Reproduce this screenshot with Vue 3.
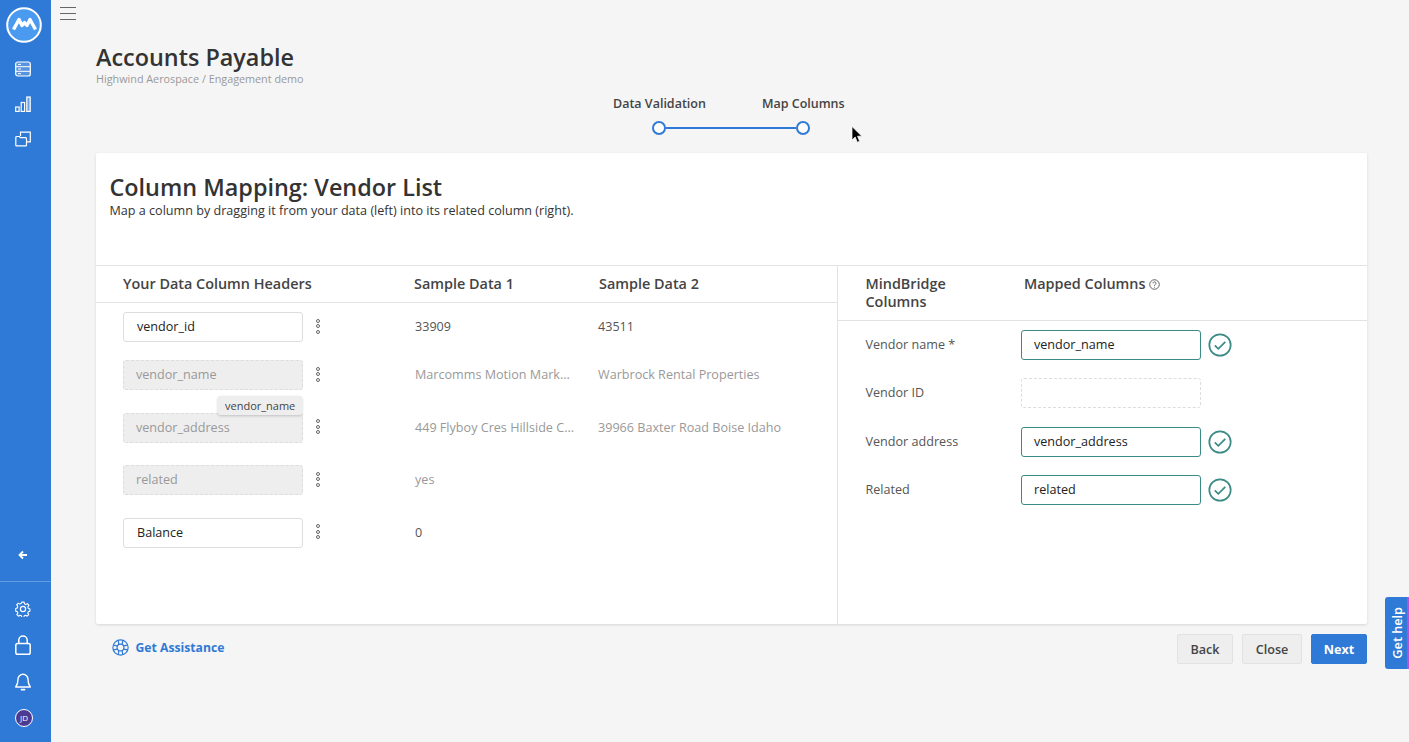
<template>
  <div class="app">
    <aside class="sidebar">
      <div class="logo">
        <svg width="36" height="36" viewBox="0 0 36 36">
          <circle cx="18" cy="18" r="16.8" fill="#4a9bf0" stroke="#fff" stroke-width="2" />
          <path d="M7.500 22.500 L13 12.500 L16 18.500 L18.500 15.500 L21 18.500 L24 12.500 L29.500 22.500" fill="none" stroke="#fff" stroke-width="3.400" stroke-linejoin="round" />
        </svg>
      </div>
      <nav class="nav-top">
        <svg class="nav-icon" viewBox="0 0 16 16" fill="rgba(255,255,255,0.2)" stroke="#fff" stroke-width="1.200">
          <rect x="0.7" y="1" width="14.6" height="14" rx="2" />
          <path d="M1 5.7h14M1 10.3h14M3 3.4h3M3 8h3M3 12.7h3" stroke-width="1" />
        </svg>
        <svg class="nav-icon" viewBox="0 0 16 16" fill="none" stroke="#fff" stroke-width="1.200">
          <rect x="0.7" y="11" width="3.4" height="4.4" />
          <rect x="6.2" y="6.500" width="3.4" height="8.9" />
          <rect x="11.8" y="1" width="3.4" height="14.4" fill="rgba(255,255,255,0.3)" />
        </svg>
        <svg class="nav-icon" viewBox="0 0 16 16" fill="none" stroke="#fff" stroke-width="1.200">
          <path d="M5.5 5V1.2h9.8v9.6h-3.8" />
          <path d="M0.8 6.5a1 1 0 0 1 1-1h2.5l1.2 1.2h5a1 1 0 0 1 1 1v6.6a.6.6 0 0 1-.6.6H1.4a.6.6 0 0 1-.6-.6z" />
        </svg>
      </nav>
      <div class="collapse-wrap">
        <svg class="back-arrow" viewBox="0 0 10 10" fill="none" stroke="#fff" stroke-width="1.800">
          <path d="M9 5H1.5M5 1.5L1.5 5 5 8.5" />
        </svg>
      </div>
      <nav class="nav-bottom">
        <svg class="nav-icon" viewBox="0 0 16 16" fill="none" stroke="#fff" stroke-width="1.200">
          <path d="M6.7 0.8h2.6l.4 2 1.5.7 1.8-1 1.6 1.9-1.2 1.7.4 1.6 1.9.7v2.4l-1.9.6-.5 1.6 1.1 1.7-1.8 1.7-1.7-1-1.5.6-.5 2H6.700l-.5-2-1.500-.6-1.700 1-1.800-1.700 1.100-1.700-.5-1.600-1.900-.6V7.900l1.900-.7.4-1.600-1.200-1.700 1.600-1.900 1.800 1 1.500-.7z" transform="translate(0.8 0.4) scale(0.9)" stroke-linejoin="round" />
          <circle cx="8" cy="8" r="2.600" />
        </svg>
        <svg class="nav-icon lock" viewBox="0 0 16 20" fill="none" stroke="#fff" stroke-width="1.500">
          <rect x="0.8" y="8.500" width="14.400" height="10.700" rx="1.800" />
          <path d="M3.800 8.500V5.200a4.200 4.200 0 0 1 8.400 0v3.300" />
        </svg>
        <svg class="nav-icon bell" viewBox="0 0 16 18" fill="none" stroke="#fff" stroke-width="1.400">
          <path d="M8 1.200a5 5 0 0 0-5 5c0 4.500-1 6.200-2.300 7.800h14.600C14 12.400 13 10.700 13 6.200a5 5 0 0 0-5-5z" stroke-linejoin="round" />
          <path d="M6.500 16.600h3" stroke-linecap="round" stroke-width="1.800" />
        </svg>
        <div class="avatar">JD</div>
      </nav>
    </aside>

    <main class="main">
      <button class="menu-btn" type="button" aria-label="Menu">
        <span></span><span></span><span></span>
      </button>

      <header class="page-head">
        <h1>Accounts Payable</h1>
        <p>Highwind Aerospace / Engagement demo</p>
      </header>

      <div class="stepper">
        <div class="step-labels">
          <span>Data Validation</span>
          <span>Map Columns</span>
        </div>
        <div class="step-track">
          <i class="dot"></i>
          <i class="bar"></i>
          <i class="dot"></i>
        </div>
      </div>

      <section class="card">
        <div class="card-head">
          <h2>Column Mapping: Vendor List</h2>
          <p>Map a column by dragging it from your data (left) into its related column (right).</p>
        </div>
        <div class="panes">
          <div class="pane-left">
            <div class="left-head">
              <span class="col-a">Your Data Column Headers</span>
              <span class="col-b">Sample Data 1</span>
              <span class="col-c">Sample Data 2</span>
            </div>
            <div class="left-rows">
              <div v-for="row in dataRows" :key="row.name" class="data-row" :class="{ used: row.used }">
                <div class="col-a chip-wrap">
                  <div class="chip">{{ row.name }}</div>
                  <div class="kebab"><i></i><i></i><i></i></div>
                </div>
                <div class="col-b sample">{{ row.s1 }}</div>
                <div class="col-c sample">{{ row.s2 }}</div>
              </div>
              <div class="tooltip">vendor_name</div>
            </div>
          </div>
          <div class="pane-right">
            <div class="right-head">
              <span class="r-label">MindBridge Columns</span>
              <span class="r-mapped">
                Mapped Columns
                <svg width="11" height="11" viewBox="0 0 12 12" fill="none" stroke="#444" stroke-width="0.900">
                  <circle cx="6" cy="6" r="5.200" />
                  <path d="M4.400 4.700a1.600 1.600 0 1 1 2.500 1.300c-.6.400-.9.700-.9 1.300M6 8.500v.9" />
                </svg>
              </span>
            </div>
            <div class="right-rows">
              <div v-for="m in mapRows" :key="m.label" class="map-row">
                <span class="r-label map-label">{{ m.label }}</span>
                <div class="target" :class="{ empty: !m.value }">{{ m.value }}</div>
                <svg v-if="m.value" class="check" width="24" height="24" viewBox="0 0 24 24" fill="none" stroke="#3a8a86">
                  <circle cx="12" cy="12" r="10.700" stroke-width="1.700" />
                  <path d="M6.800 12.400l3.500 3.500 7-7" stroke-width="1.700" />
                </svg>
              </div>
            </div>
          </div>
        </div>
      </section>

      <footer class="actions">
        <a class="assist">
          <svg width="17" height="17" viewBox="0 0 16 16" fill="none" stroke="#2f7ad6" stroke-width="1.100">
            <circle cx="8" cy="8" r="7.200" />
            <circle cx="8" cy="8" r="3.200" />
            <path d="M5.800 1.200l.7 3.900M10.200 1.200l-.7 3.900M5.800 14.800l.7-3.900M10.200 14.800l-.7-3.900M1.200 5.800l3.900.7M1.200 10.200l3.900-.7M14.800 5.800l-3.900.7M14.800 10.200l-3.900-.7" />
          </svg>
          Get Assistance
        </a>
        <div class="buttons">
          <button class="btn" type="button">Back</button>
          <button class="btn" type="button">Close</button>
          <button class="btn primary" type="button">Next</button>
        </div>
      </footer>
    </main>

    <div class="help-tab"><span>Get help</span></div>

    <svg class="cursor" width="12" height="18" viewBox="0 0 12 18">
      <path d="M1 0.500V14l3.200-3 2.100 5.200 2.300-1-2.100-5h4.300z" fill="#000" stroke="#fff" stroke-width="0.700" />
    </svg>
  </div>
</template>

<script setup>
const dataRows = [
  { name: 'vendor_id', s1: '33909', s2: '43511', used: false },
  { name: 'vendor_name', s1: 'Marcomms Motion Mark...', s2: 'Warbrock Rental Properties', used: true },
  { name: 'vendor_address', s1: '449 Flyboy Cres Hillside C...', s2: '39966 Baxter Road Boise Idaho', used: true },
  { name: 'related', s1: 'yes', s2: '', used: true },
  { name: 'Balance', s1: '0', s2: '', used: false }
]

const mapRows = [
  { label: 'Vendor name *', value: 'vendor_name' },
  { label: 'Vendor ID', value: '' },
  { label: 'Vendor address', value: 'vendor_address' },
  { label: 'Related', value: 'related' }
]
</script>

<style>
html,
body {
  margin: 0;
  background: #f5f5f5;
}
</style>

<style scoped>
.app {
  position: relative;
  display: flex;
  width: 1409px;
  height: 742px;
  overflow: hidden;
  background: #f5f5f5;
  color: #333;
  font-family: "Open Sans", "Liberation Sans", sans-serif;
}

.sidebar {
  flex: 0 0 51px;
  display: flex;
  flex-direction: column;
  align-items: center;
  background: #2f7ad6;
}

.logo {
  height: 36px;
  margin-top: 7px;
  margin-right: 3px;
}

.nav-top {
  display: flex;
  flex-direction: column;
  align-items: center;
  gap: 19px;
  margin-top: 18px;
  margin-right: 5px;
}

.nav-icon {
  display: block;
  width: 16px;
  height: 16px;
}

.nav-icon.lock {
  height: 20px;
}

.nav-icon.bell {
  height: 18px;
}

.collapse-wrap {
  width: 100%;
  margin-top: auto;
  padding-top: 20px;
  display: flex;
  justify-content: center;
  border-bottom: 1px solid rgba(255, 255, 255, 0.25);
  box-sizing: border-box;
  height: 52px;
}

.back-arrow {
  width: 10px;
  height: 10px;
  margin-right: 5px;
}

.nav-bottom {
  display: flex;
  flex-direction: column;
  align-items: center;
  gap: 18px;
  padding-top: 19px;
  padding-bottom: 15px;
  margin-right: 5px;
}

.avatar {
  width: 16px;
  height: 16px;
  margin-left: 2px;
  border: 1px solid #fff;
  border-radius: 50%;
  background: #4a3a94;
  color: #fff;
  font-size: 8px;
  line-height: 16px;
  text-align: center;
}

.main {
  position: relative;
  flex: 1;
  min-width: 0;
  padding: 0 42px 0 45px;
}

.menu-btn {
  display: flex;
  flex-direction: column;
  gap: 5px;
  position: absolute;
  left: 9px;
  top: 7px;
  width: 16px;
  padding: 0;
  border: 0;
  background: none;
}

.menu-btn span {
  display: block;
  height: 1px;
  background: #666;
  width: 16px;
}

.page-head {
  padding-top: 41px;
}

.page-head h1 {
  margin: 0;
  font-size: 23.400px;
  line-height: 32px;
  font-weight: 600;
  color: #333;
}

.page-head p {
  margin: 0;
  font-size: 10.800px;
  line-height: 12px;
  color: #999;
}

.stepper {
  width: 300px;
  margin: 11px auto 0 517px;
}

.step-labels {
  display: flex;
  gap: 56px;
  font-size: 12.500px;
  font-weight: 600;
  line-height: 16px;
  color: #444;
}

.step-track {
  display: flex;
  align-items: center;
  width: 158px;
  height: 14px;
  margin: 9px 0 0 39px;
}

.dot {
  flex: none;
  width: 10px;
  height: 10px;
  border: 2px solid #2f7ad6;
  border-radius: 50%;
  background: #fff;
}

.bar {
  flex: 1;
  height: 2px;
  background: #2f7ad6;
}

.card {
  height: 471px;
  margin-top: 18px;
  background: #fff;
  border-radius: 2px;
  box-shadow: 0 1px 3px rgba(0, 0, 0, 0.12);
  display: flex;
  flex-direction: column;
}

.card-head {
  height: 113px;
  box-sizing: border-box;
  padding: 18px 14px 0 13.500px;
  border-bottom: 1px solid #e2e2e2;
}

.card-head h2 {
  margin: 0;
  font-size: 23.400px;
  line-height: 32px;
  font-weight: 600;
  color: #333;
}

.card-head p {
  margin: 0;
  font-size: 12.600px;
  line-height: 16px;
  color: #333;
}

.panes {
  flex: 1;
  display: flex;
  min-height: 0;
}

.pane-left {
  flex: 0 0 741px;
  border-right: 1px solid #e2e2e2;
}

.pane-right {
  flex: 1;
}

.left-head {
  display: flex;
  align-items: center;
  height: 35px;
  padding-bottom: 1px;
  border-bottom: 1px solid #e2e2e2;
  font-size: 14.400px;
  font-weight: 600;
  color: #444;
  padding-left: 27px;
}

.col-a {
  flex: 0 0 291px;
}

.col-b {
  flex: 0 0 185px;
}

.col-c {
  flex: 1;
}

.left-rows {
  position: relative;
  padding-top: 9px;
}

.data-row {
  display: flex;
  align-items: center;
  height: 30px;
  margin-bottom: 22.600px;
  padding-left: 27px;
}

.data-row:first-child {
  margin-bottom: 18px;
}

.chip-wrap {
  display: flex;
  align-items: center;
}

.chip {
  width: 180px;
  height: 30px;
  box-sizing: border-box;
  padding-left: 13px;
  border: 1px solid #ddd;
  border-radius: 3px;
  background: #fff;
  font-size: 12.600px;
  line-height: 27px;
  color: #222;
}

.used .chip {
  padding-left: 12px;
  border: 1px dashed #ddd;
  background: #eee;
  color: #999;
}

.kebab {
  display: flex;
  flex-direction: column;
  gap: 1.500px;
  margin-left: 13px;
  margin-top: -2px;
}

.kebab i {
  display: block;
  width: 2px;
  height: 2px;
  border: 1px solid #666;
  border-radius: 50%;
}

.sample {
  font-size: 12.600px;
  color: #555;
  white-space: nowrap;
  margin-left: 1px;
  margin-top: -1px;
}

.used .sample {
  color: #999;
}

.col-c.sample {
  margin-left: -2px;
}

.tooltip {
  position: absolute;
  left: 122px;
  top: 93px;
  padding: 0 7px;
  height: 19px;
  border-radius: 2px;
  background: #eee;
  box-shadow: 0 1px 3px rgba(0, 0, 0, 0.2);
  font-size: 11px;
  line-height: 19px;
  color: #444;
}

.right-head {
  display: flex;
  height: 55px;
  box-sizing: border-box;
  padding: 9px 0 0 27.500px;
  border-bottom: 1px solid #e2e2e2;
  font-size: 14.400px;
  font-weight: 600;
  line-height: 18px;
  color: #444;
}

.right-head .r-label {
  flex: 0 0 158.500px;
  padding-right: 60px;
  box-sizing: border-box;
}

.r-mapped {
  display: flex;
  align-items: center;
  gap: 4px;
  height: 18px;
}

.right-rows {
  padding-top: 9px;
}

.map-row {
  display: flex;
  align-items: center;
  height: 30px;
  margin-bottom: 18.340px;
  padding-left: 27.500px;
}

.map-label {
  flex: 0 0 155.500px;
  font-size: 12.600px;
  color: #555;
  margin-top: -1px;
}

.target {
  width: 180px;
  height: 30px;
  box-sizing: border-box;
  padding-left: 12px;
  border: 1px solid #3a8a86;
  border-radius: 3px;
  font-size: 12.600px;
  line-height: 27px;
  color: #222;
}

.target.empty {
  border: 1px dashed #ddd;
}

.check {
  margin-left: 7px;
}

.actions {
  display: flex;
  justify-content: space-between;
  align-items: center;
  margin-top: 10px;
  height: 30px;
}

.assist {
  display: flex;
  align-items: center;
  gap: 7px;
  margin-left: 15.500px;
  margin-top: -3px;
  color: #2f7ad6;
  font-size: 12.200px;
  font-weight: 700;
}

.buttons {
  display: flex;
  gap: 9px;
}

.btn {
  width: 56px;
  height: 30px;
  padding: 0;
  border: 1px solid #e2e2e2;
  border-radius: 2px;
  background: #eee;
  color: #444;
  font-family: inherit;
  font-size: 12.600px;
  font-weight: 600;
}

.btn + .btn {
  width: 60px;
}

.btn.primary {
  width: 56px;
  border-color: #2f7ad6;
  background: #2f7ad6;
  color: #fff;
  font-weight: 700;
}

.help-tab {
  position: absolute;
  right: 0;
  top: 597px;
  width: 24px;
  height: 72px;
  box-sizing: border-box;
  padding-left: 2px;
  border-radius: 3px 0 0 3px;
  border-right: 2px solid #c04fd0;
  background: #2f7ad6;
  display: flex;
  align-items: center;
  justify-content: center;
}

.help-tab span {
  color: #fff;
  font-size: 12.700px;
  font-weight: 600;
  white-space: nowrap;
  writing-mode: vertical-rl;
  transform: rotate(180deg);
}

.cursor {
  position: absolute;
  left: 851px;
  top: 126px;
}
</style>
